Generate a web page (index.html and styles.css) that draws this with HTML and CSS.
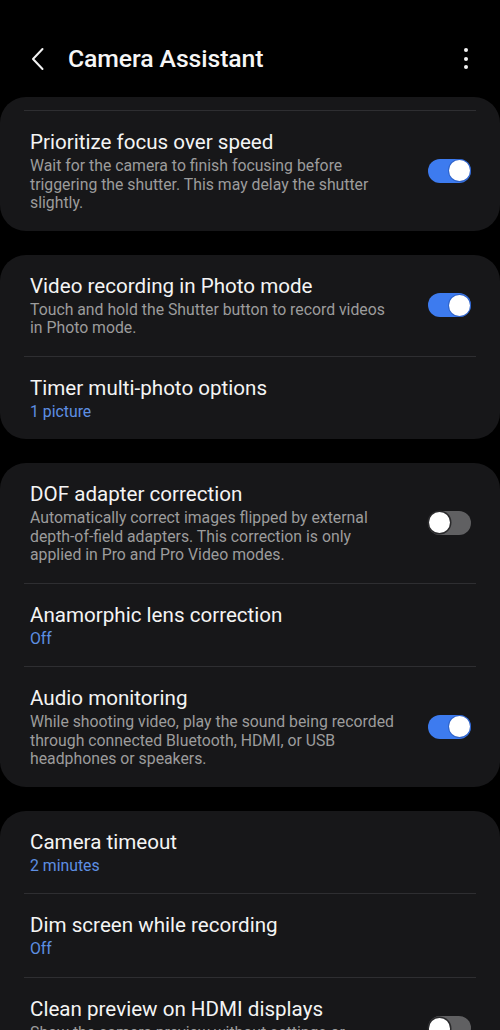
FILE: index.html
```html
<!DOCTYPE html>
<html lang="en">
<head>
<meta charset="utf-8">
<title>Camera Assistant</title>
<link rel="stylesheet" href="styles.css">
</head>
<body>
<header class="appbar">
  <svg class="back" width="14" height="24" viewBox="0 0 14 24"><path d="M11.5 2 L2 12 L11.5 22" fill="none" stroke="#f2f2f2" stroke-width="2" stroke-linecap="round" stroke-linejoin="round"/></svg>
  <h1 class="title">Camera Assistant</h1>
  <div class="kebab"><span></span><span></span><span></span></div>
</header>
<main class="list">
  <section class="card">
    <div class="stub"></div>
    <div class="item">
      <div class="text">
        <div class="label">Prioritize focus over speed</div>
        <div class="desc">Wait for the camera to finish focusing before triggering the shutter. This may delay the shutter slightly.</div>
      </div>
      <div class="switch on"><span class="knob"></span></div>
    </div>
  </section>
  <section class="card">
    <div class="item">
      <div class="text">
        <div class="label">Video recording in Photo mode</div>
        <div class="desc">Touch and hold the Shutter button to record videos in Photo mode.</div>
      </div>
      <div class="switch on"><span class="knob"></span></div>
    </div>
    <div class="item">
      <div class="text">
        <div class="label">Timer multi-photo options</div>
        <div class="value">1 picture</div>
      </div>
    </div>
  </section>
  <section class="card">
    <div class="item">
      <div class="text">
        <div class="label">DOF adapter correction</div>
        <div class="desc">Automatically correct images flipped by external depth&#8209;of&#8209;field adapters. This correction is only applied in Pro and Pro Video modes.</div>
      </div>
      <div class="switch"><span class="knob"></span></div>
    </div>
    <div class="item">
      <div class="text">
        <div class="label">Anamorphic lens correction</div>
        <div class="value">Off</div>
      </div>
    </div>
    <div class="item">
      <div class="text">
        <div class="label">Audio monitoring</div>
        <div class="desc">While shooting video, play the sound being recorded through connected Bluetooth, HDMI, or USB headphones or speakers.</div>
      </div>
      <div class="switch on"><span class="knob"></span></div>
    </div>
  </section>
  <section class="card">
    <div class="item">
      <div class="text">
        <div class="label">Camera timeout</div>
        <div class="value">2 minutes</div>
      </div>
    </div>
    <div class="item">
      <div class="text">
        <div class="label">Dim screen while recording</div>
        <div class="value">Off</div>
      </div>
    </div>
    <div class="item">
      <div class="text">
        <div class="label">Clean preview on HDMI displays</div>
        <div class="desc">Show the camera preview without settings or buttons on connected HDMI displays.</div>
      </div>
      <div class="switch"><span class="knob"></span></div>
    </div>
  </section>
</main>
</body>
</html>
```
FILE: styles.css
```css
* { box-sizing: border-box; }
html, body { margin: 0; padding: 0; background: #000; }
body {
  width: 500px;
  height: 1030px;
  overflow: hidden;
  font-family: Roboto, "Noto Sans", sans-serif;
  color: #f4f4f4;
}
.appbar {
  height: 97px;
  display: flex;
  align-items: center;
  padding: 20px 30px 0 31px;
}
.back { flex: none; display: block; }
.title {
  margin: 0 0 0 23px;
  flex: 1;
  font-size: 24.8px;
  font-weight: 500;
  letter-spacing: -0.1px;
  color: #f6f6f6;
}
.kebab {
  display: flex;
  flex-direction: column;
  align-items: center;
  gap: 4.5px;
  width: 8px;
}
.kebab span {
  width: 4px;
  height: 4px;
  border-radius: 50%;
  background: #f2f2f2;
}
.list {
  display: flex;
  flex-direction: column;
  gap: 24px;
}
.card {
  background: #171719;
  border-radius: 26px;
}
.stub { height: 13px; }
.item {
  display: flex;
  align-items: center;
  padding: 18px 5px 18px 6px;
  border-top: 1px solid #2e2e31;
  margin: 0 24px;
}
.card > .item:first-child { border-top: none; }
.text { flex: 1; min-width: 0; }
.label {
  font-size: 20.6px;
  line-height: 26px;
  color: #f4f4f4;
}
.desc {
  margin-top: 2px;
  font-size: 15.8px;
  line-height: 18.5px;
  color: #9c9c9c;
  max-width: 368px;
}
.value {
  margin-top: 2px;
  font-size: 15.8px;
  line-height: 18.5px;
  color: #5e8fe3;
}
.switch {
  flex: none;
  width: 43px;
  height: 24px;
  border-radius: 12px;
  background: #606062;
  position: relative;
}
.switch .knob {
  position: absolute;
  top: 1.5px;
  left: 1px;
  width: 21px;
  height: 21px;
  border-radius: 50%;
  background: #fff;
  box-shadow: 0 0 0 1.5px #2a2a2c;
}
.switch.on { background: #3d7bef; }
.switch.on .knob { left: auto; right: 1px; box-shadow: 0 0 0 1px #2f63c9; }
```
